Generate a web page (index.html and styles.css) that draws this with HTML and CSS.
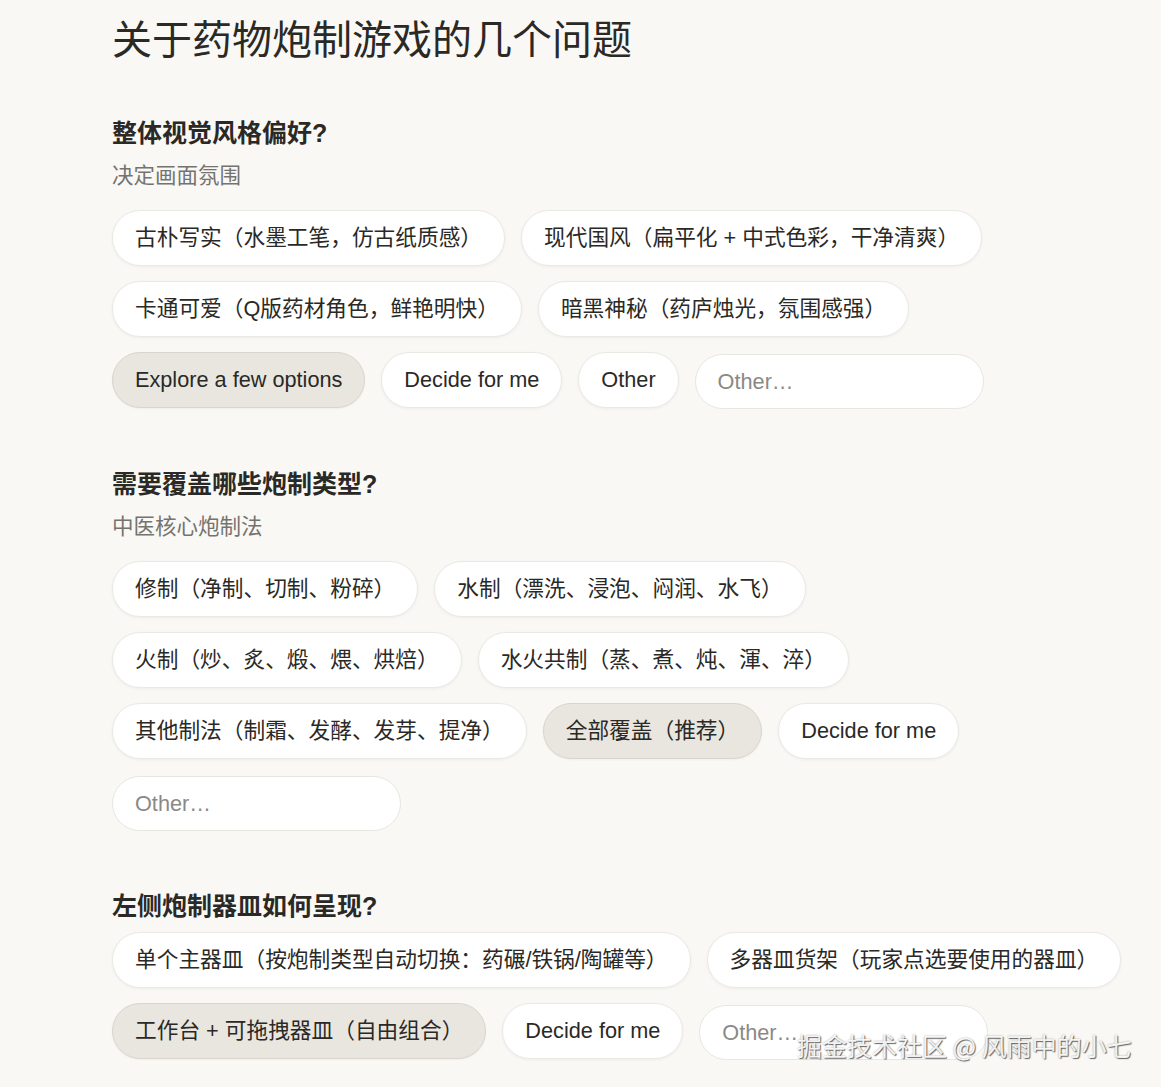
FILE: index.html
```html
<!DOCTYPE html>
<html lang="zh-CN">
<head>
<meta charset="utf-8">
<title>关于药物炮制游戏的几个问题</title>
<link rel="stylesheet" href="styles.css">
</head>
<body>
<main class="page">
  <h1 class="title">关于药物炮制游戏的几个问题</h1>

  <section class="question">
    <h2 class="q-title">整体视觉风格偏好?</h2>
    <p class="q-sub">决定画面氛围</p>
    <div class="options">
      <button class="chip">古朴写实（水墨工笔，仿古纸质感）</button>
      <button class="chip">现代国风（扁平化 + 中式色彩，干净清爽）</button>
      <button class="chip">卡通可爱（Q版药材角色，鲜艳明快）</button>
      <button class="chip">暗黑神秘（药庐烛光，氛围感强）</button>
      <button class="chip selected">Explore a few options</button>
      <button class="chip">Decide for me</button>
      <button class="chip">Other</button>
      <input class="other-input" type="text" placeholder="Other…">
    </div>
  </section>

  <section class="question">
    <h2 class="q-title">需要覆盖哪些炮制类型?</h2>
    <p class="q-sub">中医核心炮制法</p>
    <div class="options">
      <button class="chip">修制（净制、切制、粉碎）</button>
      <button class="chip">水制（漂洗、浸泡、闷润、水飞）</button>
      <button class="chip">火制（炒、炙、煅、煨、烘焙）</button>
      <button class="chip">水火共制（蒸、煮、炖、渾、淬）</button>
      <button class="chip">其他制法（制霜、发酵、发芽、提净）</button>
      <button class="chip selected">全部覆盖（推荐）</button>
      <button class="chip">Decide for me</button>
      <input class="other-input" type="text" placeholder="Other…">
    </div>
  </section>

  <section class="question">
    <h2 class="q-title">左侧炮制器皿如何呈现?</h2>
    <div class="options">
      <button class="chip">单个主器皿（按炮制类型自动切换：药碾/铁锅/陶罐等）</button>
      <button class="chip">多器皿货架（玩家点选要使用的器皿）</button>
      <button class="chip selected">工作台 + 可拖拽器皿（自由组合）</button>
      <button class="chip">Decide for me</button>
      <input class="other-input" type="text" placeholder="Other…">
    </div>
  </section>
</main>
<div class="watermark">掘金技术社区 @ 风雨中的小七</div>
</body>
</html>
```

FILE: styles.css
```css
html, body {
  margin: 0;
  padding: 0;
}

body {
  background: #f9f8f5;
  color: #2a2926;
  font-family: "Liberation Sans", "Noto Sans CJK SC", sans-serif;
  min-height: 1087px;
  overflow: hidden;
}

.page {
  padding: 16px 9px 0 112px;
}

.title {
  margin: 0;
  font-size: 40px;
  line-height: 48px;
  font-weight: 400;
  color: #2a2926;
}

.question {
  margin-top: 59px;
}

.question:first-of-type {
  margin-top: 53px;
}

.q-title {
  margin: 0 0 10px;
  font-size: 25px;
  line-height: 32px;
  font-weight: 700;
  color: #2a2926;
}

.q-sub {
  margin: 13px 0 20px;
  font-size: 21.5px;
  line-height: 28px;
  color: #75736e;
}

.options {
  display: flex;
  flex-wrap: wrap;
  gap: 15px 16px;
}

.chip {
  box-sizing: border-box;
  height: 56px;
  padding: 0 22px;
  border: 1px solid #ebe9e4;
  border-radius: 999px;
  background: #ffffff;
  box-shadow: 0 1px 3px rgba(60, 50, 30, 0.06);
  font-family: inherit;
  font-size: 21.7px;
  line-height: 28px;
  color: #2a2926;
  white-space: nowrap;
  cursor: pointer;
}

.chip.selected {
  background: #e9e6df;
  border-color: #d9d5cc;
  box-shadow: 0 1px 2px rgba(60, 50, 30, 0.05);
}

.other-input {
  box-sizing: border-box;
  width: 289px;
  height: 55px;
  margin-top: 2px;
  padding: 0 22px;
  border: 1px solid #e8e6e1;
  border-radius: 999px;
  background: #ffffff;
  font-family: inherit;
  font-size: 21.7px;
  color: #2a2926;
  outline: none;
}

.other-input::placeholder {
  color: #8b8985;
}

.watermark {
  position: absolute;
  left: 797px;
  top: 1028px;
  font-family: "Noto Sans CJK SC", "Liberation Sans", sans-serif;
  font-size: 25px;
  line-height: 34px;
  color: rgba(255, 255, 255, 0.92);
  text-shadow: 1px 1px 1px rgba(0, 0, 0, 0.55), 0 0 2px rgba(0, 0, 0, 0.35);
  white-space: nowrap;
}
```
